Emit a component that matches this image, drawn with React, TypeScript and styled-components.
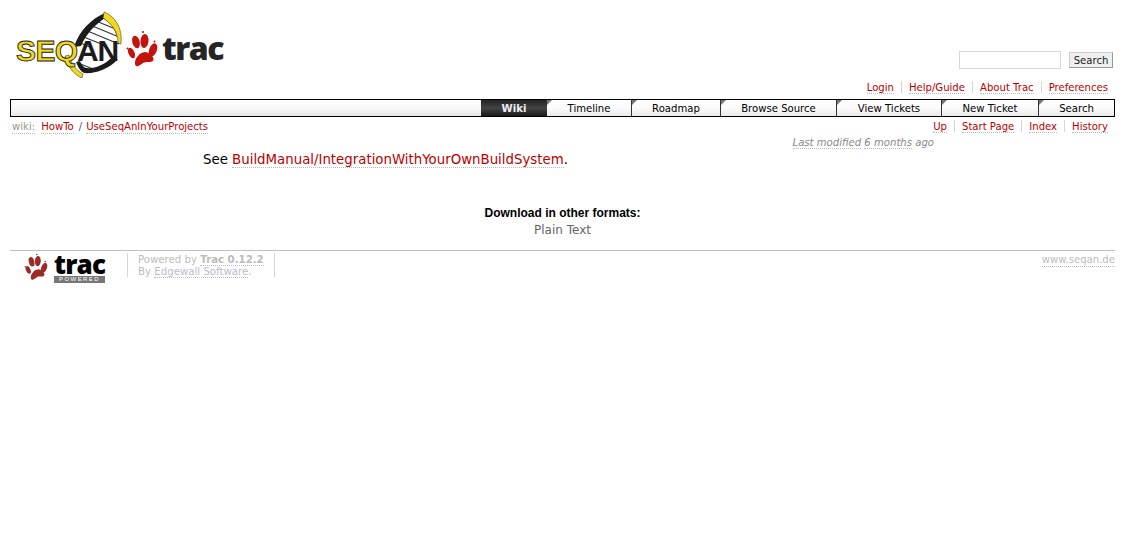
import styled, { createGlobalStyle } from "styled-components";

const GlobalStyle = createGlobalStyle`
  html, body {
    margin: 0;
    padding: 0;
    background: #fff;
    color: #000;
    font-family: "DejaVu Sans", Verdana, sans-serif;
    font-size: 10.1px;
  }
`;

const mainTabs = [
  { label: "Timeline", width: 84 },
  { label: "Roadmap", width: 89 },
  { label: "Browse Source", width: 116 },
  { label: "View Tickets", width: 105 },
  { label: "New Ticket", width: 97 },
  { label: "Search", width: 76 },
];

const Paw = ({ width, height, color }: { width: number; height: number; color: string }) => (
  <svg width={width} height={height} viewBox="126 30 32 38">
    <g fill={color}>
      <ellipse cx="131.5" cy="53" rx="3" ry="5.5" transform="rotate(-25 131.5 53)" />
      <ellipse cx="136" cy="42" rx="3.7" ry="6.5" transform="rotate(-15 136 42)" />
      <ellipse cx="144.5" cy="41" rx="4" ry="7" transform="rotate(5 144.5 41)" />
      <ellipse cx="153" cy="50" rx="3.8" ry="7" transform="rotate(20 153 50)" />
      <path d="M146 52C151 54 155 58 153 61C150 63 146 61 143 63C140 65 138 67 136 66C134 64 135 59 138 56C140 53 143 52 146 52Z" />
      <circle cx="127.5" cy="48.5" r="1" />
      <circle cx="143" cy="32" r="1.1" />
      <circle cx="154.5" cy="41.5" r="1" />
    </g>
  </svg>
);

// drawn in page coordinates so the helix can be read against the reference
const SeqanMark = () => (
  <svg width="110" height="72" viewBox="16 8 110 72">
    <path d="M76 46C80 32 92 20 104 15L118 32L119 44L114 60L100 71L83 74L72 60Z" fill="#fff" />
    <g stroke="#333" strokeWidth="1.1">
      <path d="M96 21L118 30" />
      <path d="M90 25L119 37" />
      <path d="M85 30L119 44" />
      <path d="M81 36L104 45" />
      <path d="M78 42L90 47" />
      <path d="M78 63L98 71" />
      <path d="M81 68L92 72" />
    </g>
    <path d="M74 47C79 31 91 19 105 13L107 17C96 23 86 34 81 46Z" fill="#1c1c1c" />
    <path d="M105 15C112 19 118 27 119 36L116 34C114 27 110 22 104 19Z" fill="#1c1c1c" />
    <path d="M76 62C78 67 80 71 84 73C94 74 108 70 118 59L110 59C104 65 94 69 86 68C83 67 81 64 80 61Z" fill="#1c1c1c" />
    <path
      d="M104 12C115 16 123 28 121 44L118 43C118 32 112 24 103 18Z"
      fill="#f3d81c"
      stroke="#222"
      strokeWidth="0.5"
    />
    <path
      d="M65 56C67 66 74 75 82 78L83 74C77 71 71 64 69 55Z"
      fill="#f3d81c"
      stroke="#222"
      strokeWidth="0.5"
    />
    <LogoSeq x="16" y="61">SEQ</LogoSeq>
    <LogoAn x="77" y="61">AN</LogoAn>
  </svg>
);

const App = () => {
  return (
    <>
      <GlobalStyle />
      <S.Page>
        <S.Banner>
          <S.Logo>
            <SeqanMark />
            <S.LogoPaw>
              <Paw width={32} height={38} color="#c4120c" />
            </S.LogoPaw>
            <S.LogoTrac>trac</S.LogoTrac>
          </S.Logo>
          <S.SearchForm>
            <S.SearchInput type="text" />
            <S.SearchButton type="button" value="Search" />
          </S.SearchForm>
        </S.Banner>

        <S.LinkBar>
          {["Login", "Help/Guide", "About Trac", "Preferences"].map((item, index) => (
            <S.BarItem key={item} $first={index === 0}>
              <S.Link>{item}</S.Link>
            </S.BarItem>
          ))}
        </S.LinkBar>

        <S.MainNav>
          <S.ActiveTab>Wiki</S.ActiveTab>
          {mainTabs.map((tab) => (
            <S.Tab key={tab.label} $width={tab.width}>
              {tab.label}
            </S.Tab>
          ))}
        </S.MainNav>

        <S.ContextRow>
          <S.Path>
            <S.PathRoot>wiki:</S.PathRoot>
            <S.Link>HowTo</S.Link>
            <S.PathSep>/</S.PathSep>
            <S.Link>UseSeqAnInYourProjects</S.Link>
          </S.Path>
          <S.ContextNav>
            {["Up", "Start Page", "Index", "History"].map((item, index) => (
              <S.BarItem key={item} $first={index === 0}>
                <S.Link>{item}</S.Link>
              </S.BarItem>
            ))}
          </S.ContextNav>
        </S.ContextRow>

        <S.Modified>
          <S.GreyLink>Last modified</S.GreyLink> <S.GreyLink>6 months</S.GreyLink> ago
        </S.Modified>

        <S.WikiText>
          See <S.Link>BuildManual/IntegrationWithYourOwnBuildSystem</S.Link>.
        </S.WikiText>

        <S.AltLinks>
          <S.AltTitle>Download in other formats:</S.AltTitle>
          <S.AltItem>Plain Text</S.AltItem>
        </S.AltLinks>

        <S.Footer>
          <S.FooterLogo>
            <Paw width={24} height={28} color="#9c2a25" />
            <S.FooterBrand>
              <S.FooterTrac>trac</S.FooterTrac>
              <S.FooterPowered>POWERED</S.FooterPowered>
            </S.FooterBrand>
          </S.FooterLogo>
          <S.Powered>
            Powered by <S.PoweredStrong>Trac 0.12.2</S.PoweredStrong>
            <br />
            By <S.FooterLink>Edgewall Software</S.FooterLink>.
          </S.Powered>
          <S.Site>www.seqan.de</S.Site>
        </S.Footer>
      </S.Page>
    </>
  );
};
export default App;

const Page = styled.div`
  margin: 0 10px;
  width: 1105px;
`;

const Banner = styled.header`
  display: flex;
  justify-content: space-between;
  align-items: flex-start;
  height: 79px;
`;

const Logo = styled.div`
  display: flex;
  align-items: flex-start;
  padding: 8px 0 0 6px;
`;

const LogoSeq = styled.text`
  font-family: "Liberation Sans", Arial, sans-serif;
  font-size: 30px;
  font-weight: 700;
  letter-spacing: -0.6px;
  fill: #f3d81c;
  stroke: #222;
  stroke-width: 0.9px;
`;

const LogoAn = styled.text`
  font-family: "Liberation Sans", Arial, sans-serif;
  font-size: 30px;
  font-weight: 700;
  letter-spacing: -1.2px;
  fill: #1c1c1c;
`;

const LogoPaw = styled.div`
  margin-top: 22px;
`;

const LogoTrac = styled.div`
  margin: 20px 0 0 4px;
  font-family: "Open Sans", sans-serif;
  font-size: 32px;
  line-height: 40px;
  font-weight: 800;
  letter-spacing: -1.5px;
  color: #252525;
`;

const SearchForm = styled.form`
  display: flex;
  align-items: center;
  gap: 8px;
  margin: 51px 2px 0 0;
`;

const SearchInput = styled.input`
  box-sizing: border-box;
  width: 102px;
  height: 18px;
  margin: 0;
  padding: 0;
  border: 1px solid #d7d7d7;
  background: #fff;
`;

const SearchButton = styled.input`
  box-sizing: border-box;
  width: 44px;
  height: 16px;
  margin: 0;
  padding: 1px 0 0;
  border: 1px solid #ccc;
  border-bottom-color: #999;
  border-right-color: #999;
  background: #efefef;
  color: #222;
  font-family: "DejaVu Sans", Verdana, sans-serif;
  font-size: 10.1px;
  line-height: 14px;
`;

const LinkBar = styled.nav`
  box-sizing: border-box;
  display: flex;
  justify-content: flex-end;
  height: 20px;
  padding: 2px 7px 0 0;
`;

const BarItem = styled.span<{ $first?: boolean }>`
  padding: 0 7px;
  border-left: ${(props) => (props.$first ? "none" : "1px solid #d7d7d7")};
  height: 12px;
  line-height: 13px;

  &:last-child {
    padding-right: 0;
  }
`;

const Link = styled.a`
  color: #b00;
  border-bottom: 1px dotted #bbb;
`;

const MainNav = styled.nav`
  box-sizing: border-box;
  display: flex;
  justify-content: flex-end;
  height: 18px;
  border: 1px solid #000;
  background: linear-gradient(#fff, #f6f6f6 60%, #e6e6e6);
  line-height: 17px;
`;

const ActiveTab = styled.div`
  width: 66px;
  text-align: center;
  background: linear-gradient(#222, #444 50%, #1a1a1a);
  color: #eee;
  font-weight: 700;
`;

const Tab = styled.div<{ $width: number }>`
  position: relative;
  box-sizing: border-box;
  width: ${(props) => props.$width}px;
  text-align: center;
  color: #000;
  background: linear-gradient(#fff, #fafafa 55%, #e9e9e9);
  border-left: 1px solid #333;

  &::before {
    content: "";
    position: absolute;
    top: 0;
    left: 0;
    border-top: 5px solid #777;
    border-right: 5px solid transparent;
  }

  &:nth-child(2) {
    border-left: none;
  }
`;

const ContextRow = styled.div`
  display: flex;
  justify-content: space-between;
  height: 17px;
  padding: 3px 7px 0 2px;
  box-sizing: border-box;
  line-height: 13px;
`;

const Path = styled.div`
  display: flex;
`;

const PathRoot = styled.span`
  margin-right: 6px;
  color: #998;
  border-bottom: 1px dotted #bbb;
  height: 13px;
`;

const PathSep = styled.span`
  margin: 0 4px 0 5px;
  color: #555;
`;

const ContextNav = styled.nav`
  display: flex;
`;

const Modified = styled.div`
  height: 16px;
  padding-right: 181px;
  text-align: right;
  font-style: italic;
  color: #888;
  line-height: 18px;
`;

const GreyLink = styled.a`
  color: #888;
  border-bottom: 1px dotted #bbb;
`;

const WikiText = styled.p`
  box-sizing: border-box;
  margin: 0;
  padding: 1px 0 0 193px;
  height: 55px;
  font-size: 13.33px;
  line-height: 17px;
  color: #000;
`;

const AltLinks = styled.div`
  height: 45px;
  text-align: center;
`;

const AltTitle = styled.div`
  font-family: "Liberation Sans", Arial, sans-serif;
  font-size: 12px;
  font-weight: 700;
  line-height: 16px;
`;

const AltItem = styled.div`
  color: #666;
  font-size: 12px;
  line-height: 18px;
`;

const Footer = styled.footer`
  display: flex;
  align-items: flex-start;
  border-top: 1px solid #c0c0c0;
  padding-top: 2px;
  color: #bbb;
`;

const FooterLogo = styled.div`
  display: flex;
  align-items: flex-start;
  width: 117px;
  padding-left: 14px;
  box-sizing: border-box;
  gap: 6px;
`;

const FooterBrand = styled.div`
  display: flex;
  flex-direction: column;
  align-items: flex-start;
`;

const FooterTrac = styled.div`
  font-family: "Open Sans", sans-serif;
  font-size: 26px;
  font-weight: 800;
  line-height: 22px;
  letter-spacing: -0.8px;
  color: #000;
`;

const FooterPowered = styled.div`
  width: 51px;
  height: 7px;
  margin-top: 1px;
  background: #777;
  color: #fff;
  font-family: "Liberation Sans", Arial, sans-serif;
  font-size: 6px;
  line-height: 7px;
  letter-spacing: 1.4px;
  text-align: center;
`;

const Powered = styled.div`
  box-sizing: border-box;
  width: 148px;
  height: 24px;
  padding: 1px 0 0 10px;
  border-left: 1px solid #d7d7d7;
  border-right: 1px solid #d7d7d7;
  font-size: 10.2px;
  line-height: 12px;
`;

const PoweredStrong = styled.strong`
  border-bottom: 1px dotted #bbb;
`;

const FooterLink = styled.a`
  color: #bbc;
  border-bottom: 1px dotted #bbb;
`;

const Site = styled.a`
  margin: 1px 0 0 auto;
  color: #bbb;
  line-height: 12px;
  border-bottom: 1px dotted #bbb;
`;

const S = {
  Page,
  Banner,
  Logo,
  LogoPaw,
  LogoTrac,
  SearchForm,
  SearchInput,
  SearchButton,
  LinkBar,
  BarItem,
  Link,
  MainNav,
  ActiveTab,
  Tab,
  ContextRow,
  Path,
  PathRoot,
  PathSep,
  ContextNav,
  Modified,
  GreyLink,
  WikiText,
  AltLinks,
  AltTitle,
  AltItem,
  Footer,
  FooterLogo,
  FooterBrand,
  FooterTrac,
  FooterPowered,
  Powered,
  PoweredStrong,
  FooterLink,
  Site,
};
